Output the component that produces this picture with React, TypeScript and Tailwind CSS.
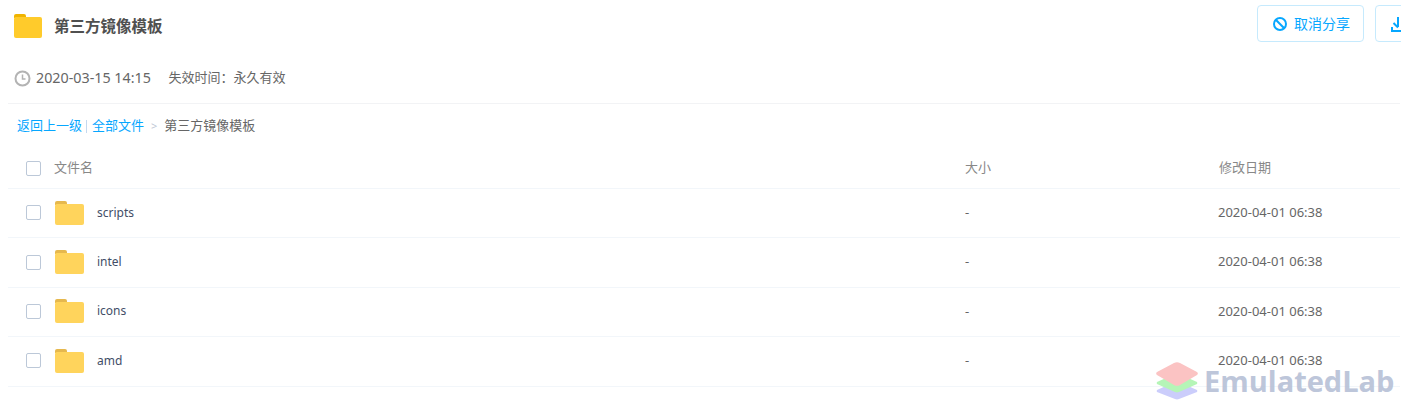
import React from "react";

const font = { fontFamily: '"Noto Sans", "Noto Sans CJK SC", sans-serif' };

function Folder({ big }: { big?: boolean }) {
  if (big) {
    return (
      <svg width="28" height="24" viewBox="0 0 28 24" className="block">
        <path d="M0 2a2 2 0 0 1 2-2h8a2 2 0 0 1 2 2v2H0z" fill="#f0b400" />
        <path d="M0 5a2 2 0 0 1 2-2h24a2 2 0 0 1 2 2v17a2 2 0 0 1-2 2H2a2 2 0 0 1-2-2z" fill="#ffcb2b" />
      </svg>
    );
  }
  return (
    <svg width="30" height="24" viewBox="0 0 30 24" className="block">
      <path d="M1 2a2 2 0 0 1 2-2h8a2 2 0 0 1 2 2v2H1z" fill="#e6b84d" />
      <path d="M1 5a2 2 0 0 1 2-2h25a2 2 0 0 1 2 2v17a2 2 0 0 1-2 2H3a2 2 0 0 1-2-2z" fill="#ffd45c" />
    </svg>
  );
}

function Check() {
  return <span className="block w-[15px] h-[15px] rounded-[2px] border border-[#bcc8d8] bg-white" />;
}

const rows = ["scripts", "intel", "icons", "amd"];

export default function App() {
  return (
    <div className="relative w-[1401px] h-[405px] overflow-hidden bg-white pl-2" style={font}>
      <div className="flex h-[59px] items-start justify-between overflow-hidden">
        <div className="flex items-center pl-[6px] pt-[14px]">
          <Folder big />
          <span className="ml-[12px] text-[15.500px] font-bold leading-[24px] text-[#505050]">第三方镜像模板</span>
        </div>
        <div className="flex shrink-0 gap-[11px] pt-[5px] w-[144px]">
          <button className="flex h-[37px] w-[107px] shrink-0 items-center justify-center gap-[6px] rounded-[4px] border border-[#c6eafd] pl-[1px] text-[14px] text-[#06a7ff]">
            <svg width="16" height="16" viewBox="0 0 16 16" fill="none" stroke="#06a7ff" strokeWidth="2">
              <circle cx="8" cy="8" r="6" />
              <path d="M3.8 3.8l8.4 8.4" />
            </svg>
            取消分享
          </button>
          <button className="flex h-[37px] w-[40px] shrink-0 items-center rounded-[4px] border border-[#c6eafd] pl-[15px]">
            <svg width="14" height="16" viewBox="0 0 14 16" fill="none" stroke="#06a7ff" strokeWidth="2" className="shrink-0">
              <path d="M7 1v10M2.5 7L7 11.500M1 11v4h13" />
            </svg>
          </button>
        </div>
      </div>

      <div className="flex h-[45px] items-center pl-[6px] pb-[6px] border-b border-[#f2f3f5] text-[13px] text-[#666666] mr-[1px]">
        <svg width="17" height="17" viewBox="0 0 17 17" fill="none" stroke="#b3b3b3" strokeWidth="2">
          <circle cx="8.500" cy="8.500" r="7" />
          <path d="M8.500 4.500v4.500h3" strokeWidth="1.500" />
        </svg>
        <span className="ml-[5px] text-[14.300px]">2020-03-15 14:15</span>
        <span className="ml-[17.500px]">失效时间：永久有效</span>
      </div>

      <div className="flex h-[45px] items-center pl-[9px] text-[13px] pb-[1px]">
        <span className="text-[#06a7ff]">返回上一级</span>
        <span className="ml-[4px] mr-[5px] h-[13px] w-px bg-[#c5d9ef]" />
        <span className="text-[#06a7ff]">全部文件</span>
        <span className="mx-[7px] text-[11px] text-[#c0c9d6]">&gt;</span>
        <span className="text-[#666666]">第三方镜像模板</span>
      </div>

      <div className="grid h-[40px] grid-cols-[46px_911px_253px_1fr] items-center border-b border-[#f2f6fa] pb-[1px] text-[13px] text-[#888888] mr-[1px]">
        <div className="pl-[18px] pt-[1px]"><Check /></div>
        <div>文件名</div>
        <div>大小</div>
        <div className="pl-[1px]">修改日期</div>
      </div>

      {rows.map((name) => (
        <div key={name} className="grid h-[49.400px] grid-cols-[46px_911px_253px_1fr] items-center border-b border-[#f2f6fa] pb-[1px] text-[13px] text-[#666666] mr-[1px]">
          <div className="pl-[18px]"><Check /></div>
          <div className="flex items-center">
            <Folder />
            <span className="ml-[13px] text-[12px] text-[#424e67]">{name}</span>
          </div>
          <div>-</div>
          <div>2020-04-01 06:38</div>
        </div>
      ))}

      <div className="absolute left-[1155px] top-[362px] flex items-center gap-[5px] opacity-90">
        <svg width="44" height="38" viewBox="0 0 44 38">
          <path d="M22 19l20 9a2 2 0 0 1 0 2L24 37a5 5 0 0 1-4 0L2 30a2 2 0 0 1 0-2z" fill="#c6c8fb" />
          <path d="M22 11l20 9a2 2 0 0 1 0 2L24 30a5 5 0 0 1-4 0L2 22a2 2 0 0 1 0-2z" fill="#aef5b0" />
          <path d="M19 1a6 6 0 0 1 6 0l17 9a2 2 0 0 1 0 3L25 23a6 6 0 0 1-6 0L2 13a2 2 0 0 1 0-3z" fill="#fbbdbd" />
        </svg>
        <span className="text-[29px] font-bold leading-[38px] text-[#b6c0d6]" style={{ fontFamily: '"Open Sans", sans-serif' }}>EmulatedLab</span>
      </div>
    </div>
  );
}
